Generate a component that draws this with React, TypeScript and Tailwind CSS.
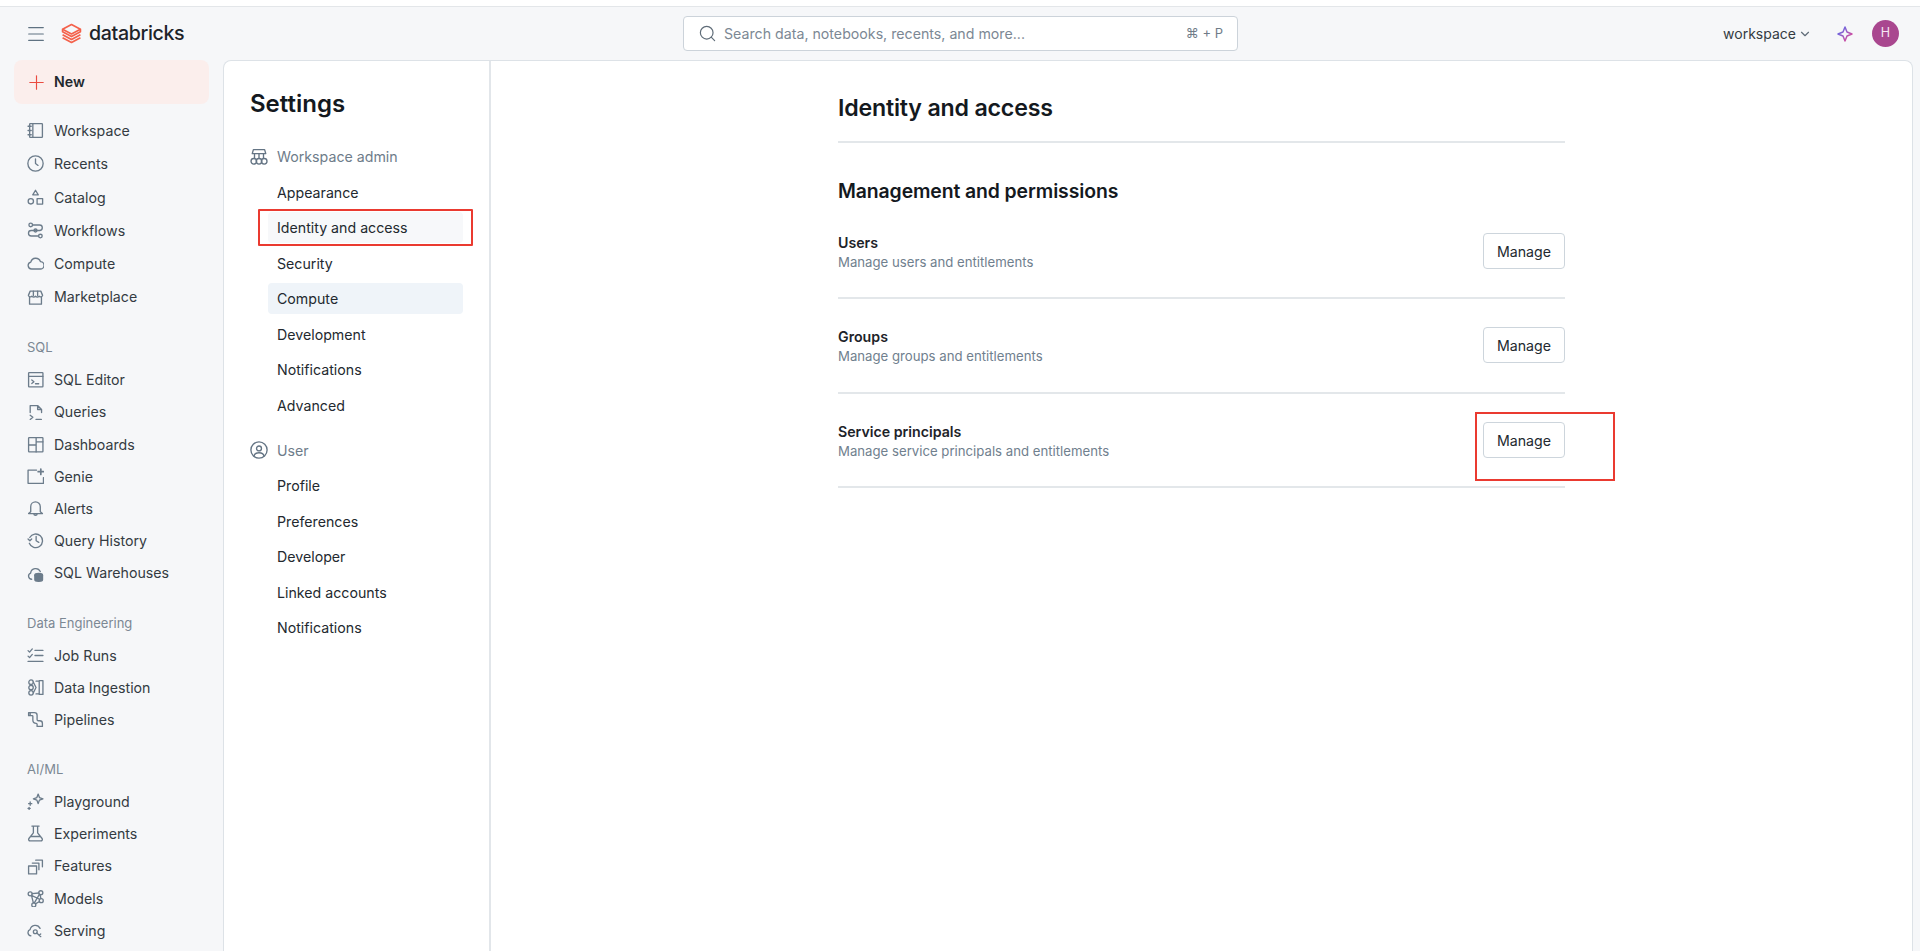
import { ChevronDown, Menu, Plus, Search } from "lucide-react";
import type { ReactNode } from "react";

const icon = "h-[17px] w-[17px] shrink-0 fill-none stroke-[#6c7c8b] stroke-[1.25]";

function Ico({ children, className = icon }: { children: ReactNode; className?: string }) {
	return (
		<svg viewBox="0 0 16 16" className={className} strokeLinecap="round" strokeLinejoin="round">
			{children}
		</svg>
	);
}

const icons: Record<string, ReactNode> = {
	Workspace: (
		<>
			<rect x="2.5" y="1.5" width="12" height="13" rx="0.6" />
			<path d="M5.5 1.5v13M1 4h3M1 8h3M1 12h3" />
		</>
	),
	Recents: (
		<>
			<circle cx="8" cy="8" r="7.2" />
			<path d="M8 3.8V8l2.4 1.8" />
		</>
	),
	Catalog: (
		<>
			<path d="M8 1.2l2.6 4.3H5.4z" />
			<circle cx="3.6" cy="11.6" r="2.5" />
			<rect x="9.5" y="9" width="5.2" height="5.2" />
		</>
	),
	Workflows: (
		<>
			<circle cx="3.5" cy="2.8" r="1.7" />
			<circle cx="12.6" cy="13.2" r="1.7" />
			<path d="M5.2 2.8h6.6a2.6 2.6 0 0 1 0 5.2H4a2.6 2.6 0 0 0 0 5.2h6.9" />
			<circle cx="8" cy="8" r="1.4" />
		</>
	),
	Compute: <path d="M4.3 13.2a3.3 3.3 0 0 1-.7-6.5 4.7 4.7 0 0 1 9-.5 3.5 3.5 0 0 1-.2 7z" />,
	Marketplace: (
		<>
			<path d="M3 2h10l1.7 4a2 2 0 0 1-3.3.8 2.4 2.4 0 0 1-3.4 0 2.4 2.4 0 0 1-3.4 0A2 2 0 0 1 1.3 6z" />
			<path d="M2.4 7.5v6.8h11.2V7.5M6 2v4M10 2v4" />
		</>
	),
	"SQL Editor": (
		<>
			<rect x="1.5" y="1.5" width="13.5" height="13.5" rx="0.6" />
			<path d="M1.5 5h13.5M4.5 8.5l2 1.6-2 1.6M8 12h3" />
		</>
	),
	Queries: (
		<path d="M3 8V1.5h7l3.7 3.7V8M10 1.5v3.7h3.7M3 10.5l2.5 2-2.5 2M8.5 14.5h5" />
	),
	Dashboards: (
		<>
			<rect x="1.5" y="1.5" width="13.5" height="13.5" rx="0.6" />
			<path d="M8.6 1.5V15M1.5 8.5h7M8.6 5.5H15" />
		</>
	),
	Genie: (
		<>
			<path d="M9 2H1v12.4h14.5V9" />
			<path d="M13 1v5M10.5 3.5h5" strokeWidth="1.6" />
		</>
	),
	Alerts: (
		<path d="M3.5 11V6.3a4.5 4.5 0 0 1 9 0V11l2 1.8h-13zM6.4 13c.2 1.8 3 1.8 3.2 0" />
	),
	"Query History": (
		<>
			<path d="M2.6 5.2A6.4 6.4 0 1 1 2.2 10.6" />
			<path d="M1 6.6l1.7 1.7 1.7-1.7M8.6 4.2v4l2.5 1.5" />
		</>
	),
	"SQL Warehouses": (
		<>
			<path d="M4.4 13.4a3 3 0 0 1-1-5.8A4.8 4.8 0 0 1 12.5 6.2" />
			<ellipse cx="11" cy="9.6" rx="3.6" ry="1.6" fill="#6c7c8b" />
			<path d="M7.4 9.6v4.2c0 2 7.2 2 7.2 0V9.6" fill="#6c7c8b" />
		</>
	),
	"Job Runs": (
		<path d="M1 3.4l1.4 1.4L5 1.8M1 8.6l1.4 1.4L5 7M7.5 3.2h7.5M7.5 8h7.5M1 13.6h14" />
	),
	"Data Ingestion": (
		<>
			<circle cx="3.8" cy="3" r="2.1" />
			<circle cx="3.8" cy="8" r="2.1" />
			<circle cx="3.8" cy="13" r="2.1" />
			<path d="M8.5 2h3v12h-3M15 1.5h-3.5v13H15M15 1.5v13M6 3l2.5 5L6 13" />
		</>
	),
	Pipelines: (
		<path d="M1.5 1.5H7c1.5 0 2.5 1 2.5 2.5v4c0 .8.5 1.2 1.2 1.2H12c1.5 0 2.5 1 2.5 2.5v2.8h-5v-2c0-.5-.3-.8-.8-.8-2.2 0-3.2-1.2-3.2-3.2V5c0-.4-.2-.6-.6-.6H1.5zM3 1.5v2.9" />
	),
	Playground: (
		<>
			<path d="M10.5 1l1.2 3.3L15 5.5l-3.3 1.2-1.2 3.3-1.2-3.3L6 5.5l3.3-1.2z" />
			<path d="M3 8.5v3M1.5 10h3M2 13.5v2M1 14.5h2" />
		</>
	),
	Experiments: (
		<path d="M4.6 1h6.8M6 1v6.4l-4.2 5.3c-.7 1 0 2.3 1.2 2.3h10c1.2 0 1.9-1.3 1.2-2.3L10 7.4V1M3.4 10.8h9.2" />
	),
	Features: (
		<>
			<rect x="1.5" y="7.5" width="7.5" height="7.5" />
			<path d="M5 4.8h6.2V11M8.2 2h6.3v6.3" />
		</>
	),
	Models: (
		<>
			<circle cx="3" cy="3.6" r="1.9" />
			<circle cx="13" cy="2.6" r="1.9" />
			<circle cx="13.4" cy="10" r="1.9" />
			<circle cx="6.4" cy="14" r="1.9" />
			<path d="M4.8 3.4l6.3-.6M4.2 5l7.6 3.7M12.3 4.4l.8 3.7M11.8 3.9l-4.9 8.2M4.2 5.1l1.8 7M7.9 13l3.9-2.2" />
		</>
	),
	Serving: (
		<>
			<path d="M3.7 13a3 3 0 0 1-.8-5.8 5 5 0 0 1 9.4-1.2" />
			<circle cx="7.8" cy="9.2" r="1.8" />
			<path d="M9.2 10.4l3.8 3.4M11.5 12.5l1.4-1.2" />
		</>
	),
};

const groups = [
	{ label: "SQL", items: ["SQL Editor", "Queries", "Dashboards", "Genie", "Alerts", "Query History", "SQL Warehouses"] },
	{ label: "Data Engineering", items: ["Job Runs", "Data Ingestion", "Pipelines"] },
	{ label: "AI/ML", items: ["Playground", "Experiments", "Features", "Models", "Serving"] },
];

const rows = [
	{ title: "Users", sub: "Manage users and entitlements" },
	{ title: "Groups", sub: "Manage groups and entitlements" },
	{ title: "Service principals", sub: "Manage service principals and entitlements", boxed: true },
];

function NavItem({ name, tall }: { name: string; tall?: boolean }) {
	return (
		<div className={`flex items-center gap-[10px] pl-[27px] text-[14.2px] text-[#343b42] ${tall ? "h-[33.3px]" : "h-[32.2px]"}`}>
			<Ico>{icons[name]}</Ico>
			<span>{name}</span>
		</div>
	);
}

function SettingsLink({ children, active, boxed }: { children: string; active?: boolean; boxed?: boolean }) {
	return (
		<div className="relative flex h-[35.5px] items-center pl-[44px] pr-[26px]">
			<div className={`flex h-[31px] w-full items-center rounded-[4px] pl-[9px] text-[14.2px] text-[#23292f] ${active ? "bg-[#eff4f9]" : boxed ? "bg-[#f7f8fa]" : ""}`}>
				{children}
			</div>
			{boxed && <div className="absolute left-[34px] top-[-1px] h-[37px] w-[215px] rounded-[1px] border-2 border-[#ea3a30]" />}
		</div>
	);
}

export default function App() {
	return (
		<div className="h-[951px] w-[1920px] overflow-hidden bg-[#f6f7f9] font-['Inter','Liberation_Sans',sans-serif] antialiased">
			<div className="h-[7px] border-b border-[#e3e6e9] bg-white" />

			<header className="flex h-[53px] items-center">
				<div className="flex w-[683px] items-center pl-[25px]">
					<Menu className="h-[22px] w-[22px] text-[#5f7282]" strokeWidth={1.2} />
					<svg viewBox="0 0 20 20" className="ml-[14px] h-[23px] w-[21px] fill-none stroke-[#f4614b] stroke-[1.6]" strokeLinejoin="round">
						<path d="M10 1.5l8.5 4.5v2.4l-8.5 4.5-8.5-4.5V6z" />
						<path d="M1.5 6l8.5 4.5L18.500 6M1.500 11.200l8.500 4.500 8.500-4.500M1.500 14l8.500 4.500 8.500-4.500" />
					</svg>
					<span className="ml-[7px] text-[19.6px] font-medium leading-none tracking-[-0.35px] text-[#1d2329]">databricks</span>
				</div>
				<div className="flex h-[35px] w-[555px] items-center rounded-[4px] border border-[#ccd3da] bg-white pl-[14px] pr-[14px]">
					<Search className="h-[19px] w-[19px] text-[#5f6c78]" strokeWidth={1.5} />
					<span className="ml-[7px] flex-1 text-[14.2px] text-[#7c8894]">Search data, notebooks, recents, and more...</span>
					<span className="text-[13px] text-[#6f7c88]">⌘ + P</span>
				</div>
				<div className="flex flex-1 items-center justify-end pr-[21px]">
					<span className="text-[14px] text-[#343b42]">workspace</span>
					<ChevronDown className="ml-[2px] h-[14px] w-[14px] text-[#5f6c78]" strokeWidth={2} />
					<svg viewBox="0 0 16 16" className="ml-[25px] h-[16px] w-[16px] fill-none">
						<defs>
							<linearGradient id="spark" x1="0" y1="0" x2="1" y2="1">
								<stop offset="0" stopColor="#4c6ef5" />
								<stop offset="1" stopColor="#f0468c" />
							</linearGradient>
						</defs>
						<path d="M8 1l2 5 5 2-5 2-2 5-2-5-5-2 5-2z" stroke="url(#spark)" strokeWidth="1.5" strokeLinejoin="round" />
					</svg>
					<div className="ml-[19px] flex h-[27px] w-[27px] items-center justify-center rounded-full bg-[#a9478f] text-[12.5px] text-[#f6e6f1]">H</div>
				</div>
			</header>

			<div className="flex h-[891px]">
				<aside className="w-[223px] shrink-0">
					<div className="ml-[14px] flex h-[44px] w-[195px] items-center gap-[6px] rounded-[8px] bg-[#fbeeec] pl-[11px] text-[14.2px] font-semibold text-[#22282e]">
						<Plus className="h-[23px] w-[23px] text-[#ea4b40]" strokeWidth={1.2} />
						New
					</div>
					<div className="mt-[10px]">
						{["Workspace", "Recents", "Catalog", "Workflows", "Compute", "Marketplace"].map((n) => (
							<NavItem key={n} name={n} tall />
						))}
					</div>
					{groups.map((g) => (
						<div key={g.label} className="mt-[18.5px]">
							<div className="flex h-[31.5px] items-center pl-[27px] text-[13px] text-[#7c8894]">{g.label}</div>
							{g.items.map((n) => (
								<NavItem key={n} name={n} />
							))}
						</div>
					))}
				</aside>

				<div className="mr-[7px] flex flex-1 rounded-tl-[8px] rounded-tr-[8px] border border-b-0 border-[#dde2e7] bg-white">
					<nav className="w-[267px] shrink-0 border-r-2 border-[#e2e6ea] pt-[27px]">
						<h2 className="h-[32px] pl-[26px] text-[24px] font-semibold leading-[32px] text-[#14191e]">Settings</h2>
						<div className="mt-[19px] flex h-[35.5px] items-center gap-[9px] pl-[26px] text-[14.2px] text-[#6e7c8a]">
							<Ico className="h-[18px] w-[18px] shrink-0 fill-none stroke-[#647484] stroke-[1.2]">
								<path d="M3 1.500h10l1 3.500H2zM4 5v4M8 5v4M12 5v4" />
								<circle cx="3.400" cy="11.800" r="2.500" />
								<circle cx="8" cy="11.800" r="2.500" />
								<circle cx="12.600" cy="11.800" r="2.500" />
							</Ico>
							Workspace admin
						</div>
						<SettingsLink>Appearance</SettingsLink>
						<SettingsLink boxed>Identity and access</SettingsLink>
						<SettingsLink>Security</SettingsLink>
						<SettingsLink active>Compute</SettingsLink>
						<SettingsLink>Development</SettingsLink>
						<SettingsLink>Notifications</SettingsLink>
						<SettingsLink>Advanced</SettingsLink>
						<div className="mt-[9.5px] flex h-[35.5px] items-center gap-[9px] pl-[26px] text-[14.2px] text-[#6e7c8a]">
							<Ico className="h-[18px] w-[18px] shrink-0 fill-none stroke-[#647484] stroke-[1.2]">
								<circle cx="8" cy="8" r="7.2" />
								<circle cx="8" cy="6.6" r="2.2" />
								<path d="M3.6 13.4c.6-4 8.2-4 8.8 0" />
							</Ico>
							User
						</div>
						<SettingsLink>Profile</SettingsLink>
						<SettingsLink>Preferences</SettingsLink>
						<SettingsLink>Developer</SettingsLink>
						<SettingsLink>Linked accounts</SettingsLink>
						<SettingsLink>Notifications</SettingsLink>
					</nav>

					<main className="flex-1 pl-[347px] pt-[30.5px]">
						<div className="w-[727px]">
							<h1 className="h-[51.5px] border-b-2 border-[#e3e7ea] text-[23.2px] font-semibold leading-[32px] tracking-[-0.2px] text-[#14191e]">Identity and access</h1>
							<h2 className="mt-[34px] h-[27.5px] text-[19.4px] font-semibold leading-[28px] tracking-[-0.1px] text-[#14191e]">Management and permissions</h2>
							{rows.map((r) => (
								<div key={r.title} className="flex h-[94.5px] items-center justify-between border-b-2 border-[#e3e7ea]">
									<div className="pt-[3px]">
										<div className="text-[14.2px] font-semibold leading-[19px] text-[#1d2329]">{r.title}</div>
										<div className="text-[13.2px] leading-[20px] text-[#70808e]">{r.sub}</div>
									</div>
									<div className="relative">
										<button className="flex h-[36px] w-[82px] items-center justify-center rounded-[4px] border border-[#cdd5dc] pt-[1px] text-[14.2px] text-[#23292f]">Manage</button>
										{r.boxed && <div className="absolute left-[-8px] top-[-10px] h-[69px] w-[140px] border-2 border-[#ea3a30]" />}
									</div>
								</div>
							))}
						</div>
					</main>
				</div>
			</div>
		</div>
	);
}
